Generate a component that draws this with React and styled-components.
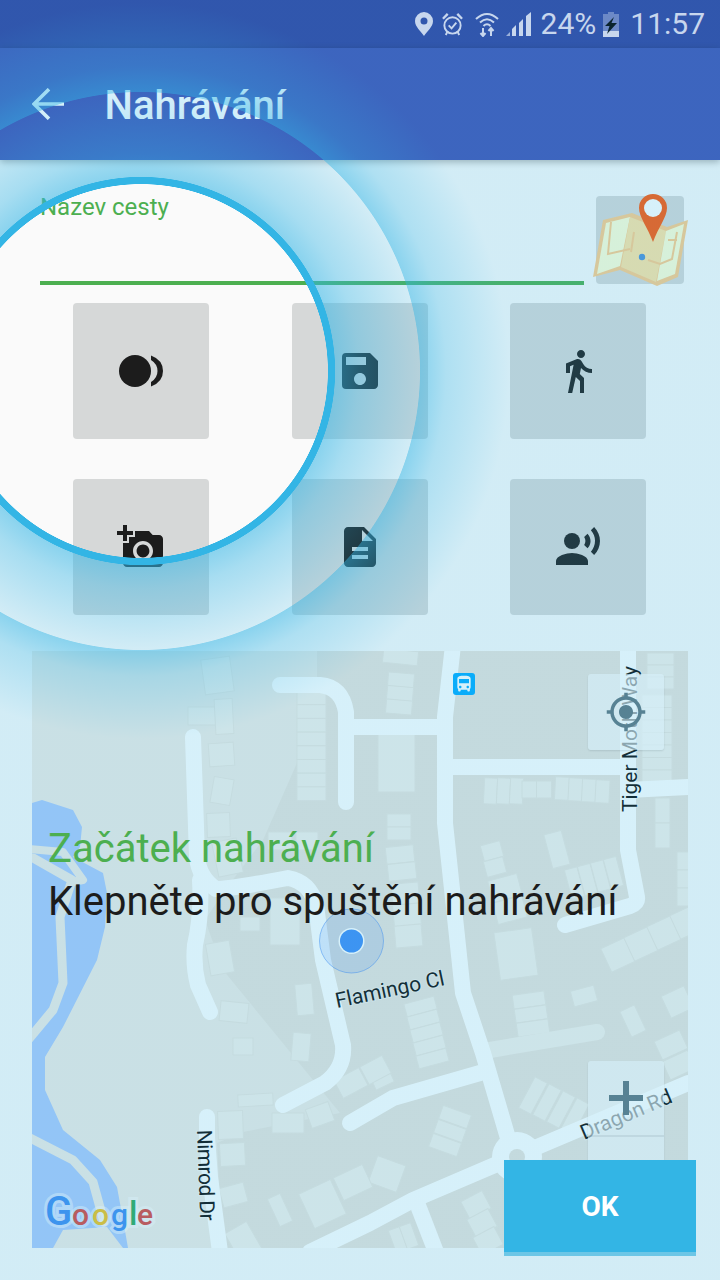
import React from 'react';
import styled, { createGlobalStyle } from 'styled-components';
import {
  MdSave,
  MdDirectionsWalk,
  MdAddAPhoto,
  MdDescription,
  MdRecordVoiceOver,
  MdGpsFixed,
  MdDirectionsBus,
} from 'react-icons/md';

const GlobalStyle = createGlobalStyle`
  html, body {
    margin: 0;
    padding: 0;
    background: #fafafa;
  }
  * {
    box-sizing: border-box;
  }
`;

const Page = styled.div`
  position: relative;
  width: 720px;
  height: 1280px;
  overflow: hidden;
  background: #fafafa;
  font-family: Roboto, "Liberation Sans", sans-serif;
`;

const StatusBar = styled.div`
  height: 48px;
  display: flex;
  align-items: center;
  justify-content: flex-end;
  padding-right: 15px;
  background: #303f9f;
  color: #ecdff0;
  font-size: 30px;
`;

const StatusIcon = styled.span`
  display: flex;
  margin-left: ${({ $gap }) => $gap}px;
  svg {
    display: block;
  }
`;

const StatusText = styled.span`
  margin-left: ${({ $gap }) => $gap}px;
  line-height: 48px;
`;

const AppBar = styled.header`
  position: relative;
  z-index: 1;
  height: 112px;
  display: flex;
  align-items: center;
  padding-left: 32px;
  background: #3f51b5;
  color: #fff;
  box-shadow: 0 2px 7px rgba(0, 0, 0, 0.3);
`;

const BackIcon = styled.span`
  display: flex;
  width: 72.5px;
`;

const Title = styled.h1`
  margin: 2px 0 0;
  font-size: 40px;
  font-weight: 500;
`;

const FormRow = styled.div`
  display: flex;
  gap: 12px;
  padding: 36px 36px 0 40px;
`;

const Field = styled.div`
  flex: 1;
  height: 89px;
  border-bottom: 4px solid #4caf50;
  color: #4caf50;
  font-size: 24px;
  line-height: 22px;
`;

const MapThumb = styled.div`
  position: relative;
  width: 88px;
  height: 88px;
  border-radius: 4px;
  background: #d6d8d8;
`;

const ThumbDrawing = styled.svg`
  position: absolute;
  left: -4px;
  top: -3px;
`;

const ActionGrid = styled.div`
  display: grid;
  grid-template-columns: repeat(3, 1fr);
  row-gap: 40px;
  justify-items: center;
  margin-top: 18px;
  padding: 0 32.4px 0 31.6px;
`;

const ActionTile = styled.button`
  width: 136px;
  height: 136px;
  padding: 0;
  border: 0;
  border-radius: 4px;
  display: flex;
  align-items: center;
  justify-content: center;
  background: #d6d8d8;
  color: #1c1c1c;
`;

const MapBox = styled.div`
  position: relative;
  height: 597px;
  margin: 36px 32px 0;
  overflow: hidden;
  background: #e8e3dc;
`;

const MapDrawing = styled.svg`
  display: block;
`;

const MapButton = styled.div`
  position: absolute;
  left: 556px;
  top: ${({ $top }) => $top}px;
  width: 76px;
  height: ${({ $tall }) => ($tall ? 152 : 76)}px;
  border-radius: 3px;
  display: flex;
  flex-direction: column;
  background: rgba(255, 255, 255, 0.62);
  box-shadow: 0 1px 2px rgba(0, 0, 0, 0.12);
  color: #60757f;
`;

const MapButtonCell = styled.div`
  height: 76px;
  flex: none;
  display: flex;
  align-items: center;
  justify-content: center;
  border-bottom: ${({ $divided }) => ($divided ? '2px solid rgba(0, 0, 0, 0.08)' : '0')};
`;

/* tint over the whole screen, with the hole over the first tile */
const Showcase = styled.div`
  position: absolute;
  inset: 0;
  z-index: 2;
  background: radial-gradient(
    circle at 141px 371px,
    transparent 186.6px,
    #33b5e5 187.2px,
    #33b5e5 193.8px,
    rgba(51, 181, 229, 0.56) 194.4px,
    rgba(51, 181, 229, 0.42) 218px,
    rgba(51, 181, 229, 0.2) 278.6px,
    rgba(51, 181, 229, 0.56) 279.4px,
    rgba(51, 181, 229, 0.38) 305px,
    rgba(51, 181, 229, 0.2) 368px
  );
`;

const Caption = styled.div`
  position: absolute;
  left: 48px;
  top: 822px;
  font-size: 40px;
  line-height: 53px;
`;

const CaptionTitle = styled.div`
  color: #4caf50;
`;

const CaptionText = styled.div`
  color: #1c1c1c;
`;

const OkButton = styled.button`
  position: absolute;
  right: 24px;
  bottom: 24px;
  width: 192px;
  height: 96px;
  padding: 0;
  border: 0;
  border-bottom: 4px solid #6cc6e6;
  background: #33b5e5;
  color: #fff;
  font-family: Roboto, "Liberation Sans", sans-serif;
  font-size: 28px;
  font-weight: 700;
`;

const row = (x, y, w, h, n, dx, dy, r = 0) =>
  Array.from({ length: n }, (_, i) => [x + dx * i, y + dy * i, w, h, r]);

const BUILDINGS = [
  [203, 658, 29, 35, -8],
  [188, 707, 28, 18, 0],
  [215, 699, 18, 35, -3],
  [209, 743, 25, 23, -4],
  [212, 778, 20, 26, 10],
  [207, 813, 23, 24, -2],
  [215, 840, 25, 35, -12],
  ...row(297, 691, 29, 13.7, 8, 0, 13.7),
  [268, 832, 24, 18, 0],
  [296, 832, 22, 18, 0],
  [240, 917, 20, 14, 0],
  [270, 898, 30, 47, 0],
  [208, 942, 24, 32, -10],
  [383, 650, 35, 14, 6],
  ...row(388, 673, 26, 14, 3, -1, 13.5, 5),
  [378, 734, 37, 58, 0],
  ...row(484, 778, 13, 26, 3, 13, 0, 3),
  ...row(522, 781, 15, 17, 2, 14.5, 0, 0),
  ...row(555, 777, 14, 23, 4, 13.5, 1, 3),
  ...row(387, 814, 24, 13, 2, 0, 13, 0),
  ...row(386, 846, 28, 17, 2, 2, 17, -6),
  ...row(392, 883, 27, 22, 3, 1.5, 21, -5),
  ...row(482, 843, 20, 16, 2, 3, 16, -15),
  ...row(490, 877, 30, 22, 2, 5, 22, -15),
  [497, 930, 38, 48, -8],
  [548, 832, 18, 35, -15],
  ...row(568, 868, 13, 30, 4, 13, -3.5, -15),
  ...row(655, 798, 15, 25, 2, 0, 25, 0),
  ...row(647, 653, 27, 12, 3, 0, 12, 0),
  ...row(642, 695, 30, 12.5, 7, 0, 12.5, 0),
  ...row(677, 852, 12, 18, 3, 0, 18, 0),
  ...row(605, 942, 26, 26, 4, 23, -11, -25),
  [572, 988, 24, 16, -15],
  [625, 1007, 16, 28, -25],
  [665, 990, 25, 24, -25],
  ...row(657, 1035, 28, 20, 2, 8, 20, -25),
  ...row(513, 993, 32, 14, 3, 2, 14, -8),
  ...row(405, 1000, 31, 13, 5, 3, 13, -15),
  [370, 1062, 20, 25, -25],
  ...row(526, 1078, 14, 35, 4, 14, 7, 28),
  ...row(440, 1110, 30, 14, 3, -5, 14, 20),
  [372, 1160, 30, 28, 20],
  ...row(464, 1195, 24, 20, 3, 6, 18, -28),
  ...row(392, 1228, 12, 24, 2, 11, -4, -20),
  [220, 1002, 28, 20, 6],
  [233, 1038, 20, 17, 0],
  [296, 984, 17, 31, -5],
  [292, 1033, 18, 28, 5],
  [238, 1094, 35, 12, -3],
  [218, 1111, 25, 28, -2],
  [220, 1143, 25, 23, -3],
  [221, 1185, 25, 20, -15],
  [272, 1113, 32, 20, 0],
  [308, 1105, 24, 20, -20],
  [337, 1073, 28, 20, -28],
  [363, 1060, 25, 20, -28],
  [305, 1185, 35, 38, -25],
  [337, 1170, 32, 25, -25],
  [233, 1225, 25, 40, -30],
  [273, 1195, 14, 30, -25],
];

const ROADS = [
  'M280 685H320Q342 687 346 712V802',
  'M347 727H445',
  'M193 737L197 857Q199 878 216 889Q230 889 288 878Q310 882 316 905L323 960L343 1045Q345 1068 325 1083L283 1105',
  'M200 880Q202 915 195 945Q193 965 198 985L210 1012',
  'M453 645L445 717V823L463 993L483 1053L510 1145',
  'M445 767H628',
  'M628 645V850L637 897Q638 903 630 906L565 925',
  'M628 790L688 787',
  'M350 1123L393 1098L480 1073',
  'M310 1252L370 1223L413 1200L537 1147L688 1083',
  'M417 1203L436 1252',
  'M207 1117V1137L210 1177L220 1252',
];

const Screen = () => (
  <MapDrawing width="656" height="597" viewBox="32 651 656 597" fontFamily="Roboto, sans-serif">
    {/* lighter ground by the water */}
    <polygon
      fill="#efebe5"
      points="32,651 317,651 317,705 297,763 263,840 225,890 205,920 223,970 340,1113 243,1132 217,1143 222,1248 32,1248"
    />
    {/* water */}
    <path
      fill="#abc9fb"
      d="M32 803L42 800L73 810L82 827L80 847L73 857L103 873L107 893L105 927L97 960L63 1027L45 1057L45 1090L63 1130L100 1160L117 1187L124 1225L128 1248H32Z"
    />
    <g fill="none" stroke="#efebe5" strokeLinejoin="round" strokeLinecap="round">
      <path strokeWidth="8" d="M30 849L63 852L83 880L72 882" />
      <path strokeWidth="9" d="M33 858L72 880L60 917L63 983L53 1010L28 1040" />
      <path strokeWidth="9" d="M28 1137L73 1160L93 1182L104 1222" />
    </g>
    <path fill="#efebe5" d="M53 1248L63 1230L107 1227L123 1248Z" />
    <g fill="#f3f0ea" stroke="#e9e5de" strokeWidth="1">
      {BUILDINGS.map(([x, y, w, h, r], i) => (
        <rect
          key={i}
          x={x}
          y={y}
          width={w}
          height={h}
          transform={`rotate(${r} ${x + w / 2} ${y + h / 2})`}
        />
      ))}
    </g>
    <path d="M490 1050L597 1032" fill="none" stroke="#f3f0ea" strokeWidth="16" strokeLinecap="round" />
    <g fill="none" stroke="#fff" strokeWidth="16" strokeLinecap="round" strokeLinejoin="round">
      {ROADS.map((d) => (
        <path key={d} d={d} />
      ))}
    </g>
    <circle cx="517" cy="1157" r="25" fill="#fff" />
    <circle cx="517" cy="1157" r="8" fill="#e8e3dc" />

    <g fontSize="21" fill="#0c0c0c" stroke="rgba(255,255,255,0.4)" strokeWidth="2" paintOrder="stroke">
      <text transform="translate(337 1008) rotate(-12)">Flamingo Cl</text>
      <text transform="translate(197 1130) rotate(88)" textLength="91">Nimrod Dr</text>
      <text transform="translate(584 1140) rotate(-23)">Dragon Rd</text>
      <text transform="translate(637 812) rotate(-90)" textLength="146">Tiger Moth Way</text>
    </g>

    <rect x="453" y="673" width="22" height="22" rx="3" fill="#00aaff" />
    <MdDirectionsBus x="454" y="674" size="20" color="#fff" />

    <circle cx="351.5" cy="941" r="32" fill="rgba(66,133,244,0.16)" stroke="rgba(66,133,244,0.5)" strokeWidth="1" />
    <circle cx="351.5" cy="941" r="13" fill="#fff" />
    <circle cx="351.5" cy="941" r="11.5" fill="#3f8cf5" />

    <text
      y="1225"
      fontWeight="500"
      fontSize="30"
      stroke="rgba(255,255,255,0.45)"
      strokeWidth="6"
      paintOrder="stroke"
    >
      <tspan x="45" fontSize="40" fill="#3f8cf0">G</tspan>
      <tspan x="72" fill="#d9463f">o</tspan>
      <tspan x="92" fill="#f0c020">o</tspan>
      <tspan x="111" fill="#3f8cf0">g</tspan>
      <tspan x="129" fontSize="33" fill="#2ea85c">l</tspan>
      <tspan x="137" fill="#d9463f">e</tspan>
    </text>
  </MapDrawing>
);

const App = () => (
  <>
    <GlobalStyle />
    <Page>
      <StatusBar>
        <StatusIcon>
          <svg width="18" height="24" viewBox="0 0 18 24" fill="currentColor">
            <path fillRule="evenodd" d="M9 0a9 9 0 0 1 9 9c0 6-6 10-9 15C6 19 0 15 0 9a9 9 0 0 1 9-9zm0 5.5a3.5 3.5 0 1 0 0 7 3.5 3.5 0 0 0 0-7z" />
          </svg>
        </StatusIcon>
        <StatusIcon $gap={8}>
          <svg width="23" height="24" viewBox="0 0 24 25" fill="none" stroke="currentColor" strokeWidth="2">
            <circle cx="12" cy="14" r="8.5" />
            <path d="M8 14l3 3 5-6" />
            <path d="M2 7l5-5M22 7l-5-5" strokeWidth="2.5" />
            <path d="M5 24l2-4M19 24l-2-4" />
          </svg>
        </StatusIcon>
        <StatusIcon $gap={11}>
          <svg width="24" height="26" viewBox="0 0 24 26" fill="none" stroke="currentColor" strokeWidth="2">
            <path d="M1 8Q12 -2 23 8" />
            <path d="M5 11.5Q12 5 19 11.5" />
            <path d="M8.5 15Q12 11.5 15.5 15" />
            <path d="M8 17v8M5.5 22l2.5 3 2.5-3M16 25v-8M13.5 20l2.5-3 2.5 3" />
          </svg>
        </StatusIcon>
        <StatusIcon $gap={7}>
          <svg width="26" height="24" viewBox="0 0 26 24" fill="currentColor">
            <path d="M0 24l4-4v4z" opacity="0.7" />
            <path d="M6 24v-7l4-4v11z" />
            <path d="M13 24V11l4-4v17z" />
            <path d="M20 24V4l5-4v24z" />
          </svg>
        </StatusIcon>
        <StatusText $gap={9}>24%</StatusText>
        <StatusIcon $gap={6}>
          <svg width="18" height="25" viewBox="0 0 18 25">
            <path d="M6 0h6v2h5v23H1V2h5z" fill="currentColor" opacity="0.4" />
            <path d="M1 19h16v6H1z" fill="currentColor" />
            <path d="M12 5L3 14h4.5L5 22l10-11H9.5z" fill="#000" />
          </svg>
        </StatusIcon>
        <StatusText $gap={10}>11:57</StatusText>
      </StatusBar>

      <AppBar>
        <BackIcon>
          <svg width="32" height="32" viewBox="0 0 32 32" fill="none" stroke="currentColor" strokeWidth="3.6">
            <path d="M32 16H2M17 1.200L2 16l15 14.800" />
          </svg>
        </BackIcon>
        <Title>Nahrávání</Title>
      </AppBar>

      <FormRow>
        <Field>Nazev cesty</Field>
        <MapThumb>
          <ThumbDrawing width="97" height="94" viewBox="592 193 97 94">
            <polygon fill="#ffcc8a" points="593,277 603,220 632,213 667,227 688,220 678,277 657,286 620,270" />
            <polygon fill="#ffffd7" points="597,274 606,223 630,217 620,266" />
            <polygon fill="#ffe4a5" points="630,217 666,231 656,282 621,267" />
            <polygon fill="#ffffd7" points="666,231 684,224 675,274 657,281" />
            <path
              d="M611 222L608 254L630 249M634 232L631 252M648 260L660 264L672 259L677 232M668 240H677"
              fill="none"
              stroke="#ffcc8a"
              strokeWidth="2"
            />
            <circle cx="642" cy="257" r="3.2" fill="#4f91d8" />
            <path d="M653 194a14 14 0 0 1 14 14c0 9-9 20-14 34c-5-14-14-25-14-34a14 14 0 0 1 14-14z" fill="#ff5709" />
            <circle cx="653" cy="208" r="9" fill="#fff" />
          </ThumbDrawing>
        </MapThumb>
      </FormRow>

      <ActionGrid>
        <ActionTile>
          <svg width="44" height="34" viewBox="0 0 44 34" fill="currentColor">
            <circle cx="16" cy="17" r="16" />
            <path d="M32 1.500Q44 6 44 17T32 32.500V28Q38.500 24 38.500 17T32 6Z" />
          </svg>
        </ActionTile>
        <ActionTile>
          <MdSave size={48} />
        </ActionTile>
        <ActionTile>
          <MdDirectionsWalk size={48} />
        </ActionTile>
        <ActionTile>
          <MdAddAPhoto size={48} />
        </ActionTile>
        <ActionTile>
          <MdDescription size={48} />
        </ActionTile>
        <ActionTile>
          <MdRecordVoiceOver size={48} />
        </ActionTile>
      </ActionGrid>

      <MapBox>
        <Screen />
        <MapButton $top={23}>
          <MapButtonCell>
            <MdGpsFixed size={42} />
          </MapButtonCell>
        </MapButton>
        <MapButton $top={410} $tall>
          <MapButtonCell $divided>
            <svg width="34" height="34" viewBox="0 0 34 34" fill="currentColor">
              <path d="M14 0h6v14h14v6H20v14h-6V20H0v-6h14z" />
            </svg>
          </MapButtonCell>
        </MapButton>
      </MapBox>

      <Showcase>
        <Caption>
          <CaptionTitle>Začátek nahrávání</CaptionTitle>
          <CaptionText>Klepněte pro spuštění nahrávání</CaptionText>
        </Caption>
        <OkButton>OK</OkButton>
      </Showcase>
    </Page>
  </>
);

export default App;
